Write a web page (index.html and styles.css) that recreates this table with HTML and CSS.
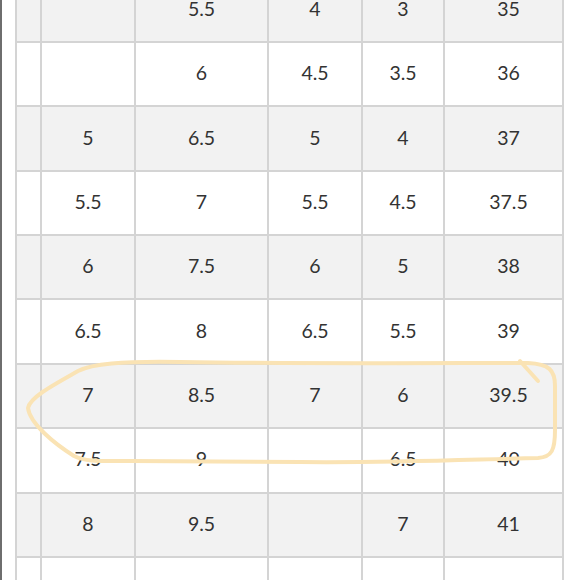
FILE: index.html
```html
<!DOCTYPE html>
<html>
<head>
<meta charset="utf-8">
<link rel="stylesheet" href="styles.css">
</head>
<body>
<div class="page">
  <div class="chart">
    <div class="cell g"></div><div class="cell g"></div><div class="cell g">5.5</div><div class="cell g">4</div><div class="cell g">3</div><div class="cell g last">35</div>
    <div class="cell"></div><div class="cell"></div><div class="cell">6</div><div class="cell">4.5</div><div class="cell">3.5</div><div class="cell last">36</div>
    <div class="cell g"></div><div class="cell g">5</div><div class="cell g">6.5</div><div class="cell g">5</div><div class="cell g">4</div><div class="cell g last">37</div>
    <div class="cell"></div><div class="cell">5.5</div><div class="cell">7</div><div class="cell">5.5</div><div class="cell">4.5</div><div class="cell last">37.5</div>
    <div class="cell g"></div><div class="cell g">6</div><div class="cell g">7.5</div><div class="cell g">6</div><div class="cell g">5</div><div class="cell g last">38</div>
    <div class="cell"></div><div class="cell">6.5</div><div class="cell">8</div><div class="cell">6.5</div><div class="cell">5.5</div><div class="cell last">39</div>
    <div class="cell g"></div><div class="cell g">7</div><div class="cell g">8.5</div><div class="cell g">7</div><div class="cell g">6</div><div class="cell g last">39.5</div>
    <div class="cell"></div><div class="cell">7.5</div><div class="cell">9</div><div class="cell"></div><div class="cell">6.5</div><div class="cell last">40</div>
    <div class="cell g"></div><div class="cell g">8</div><div class="cell g">9.5</div><div class="cell g"></div><div class="cell g">7</div><div class="cell g last">41</div>
    <div class="cell"></div><div class="cell"></div><div class="cell"></div><div class="cell"></div><div class="cell"></div><div class="cell last"></div>
  </div>
  <svg class="mark" width="580" height="580" viewBox="0 0 580 580">
    <path d="M 528 363 C 450 363 300 364 180 362 C 120 361 92 364 78 371 C 55 384 30 397 28 408 C 30 424 55 444 74 456 C 86 462 100 461 130 461 L 300 462 C 400 463 480 459 538 458 C 552 457 555 450 555 430 L 555 386 C 555 370 549 364 528 363" />
    <path d="M 520 361 L 538 381" />
  </svg>
</div>
</body>
</html>
```

FILE: styles.css
```css
html, body {
  margin: 0;
  padding: 0;
  background: #ffffff;
}

.page {
  position: relative;
  width: 578px;
  height: 580px;
  overflow: hidden;
  border-left: 2px solid #6e6e6e;
  background: #ffffff;
}

.chart {
  display: grid;
  grid-template-columns: 23px 92px 131px 92px 80px 117px;
  grid-auto-rows: 62.375px;
  gap: 2px;
  padding: 2px;
  width: 545px;
  margin-left: 13px;
  margin-top: -23.4px;
  background: #d4d4d4;
  font-family: "Lato", "Noto Sans", sans-serif;
  font-size: 19.5px;
  color: #333333;
}

.cell {
  display: flex;
  align-items: center;
  justify-content: center;
  padding-bottom: 3px;
  box-sizing: border-box;
  background: #ffffff;
}

.cell.g {
  background: #f2f2f2;
}

.cell.last {
  padding-left: 10px;
}

.mark {
  position: absolute;
  left: -2px;
  top: 0;
  fill: none;
  stroke: #fae3b4;
  stroke-width: 4;
  stroke-linecap: round;
  stroke-linejoin: round;
}
```
